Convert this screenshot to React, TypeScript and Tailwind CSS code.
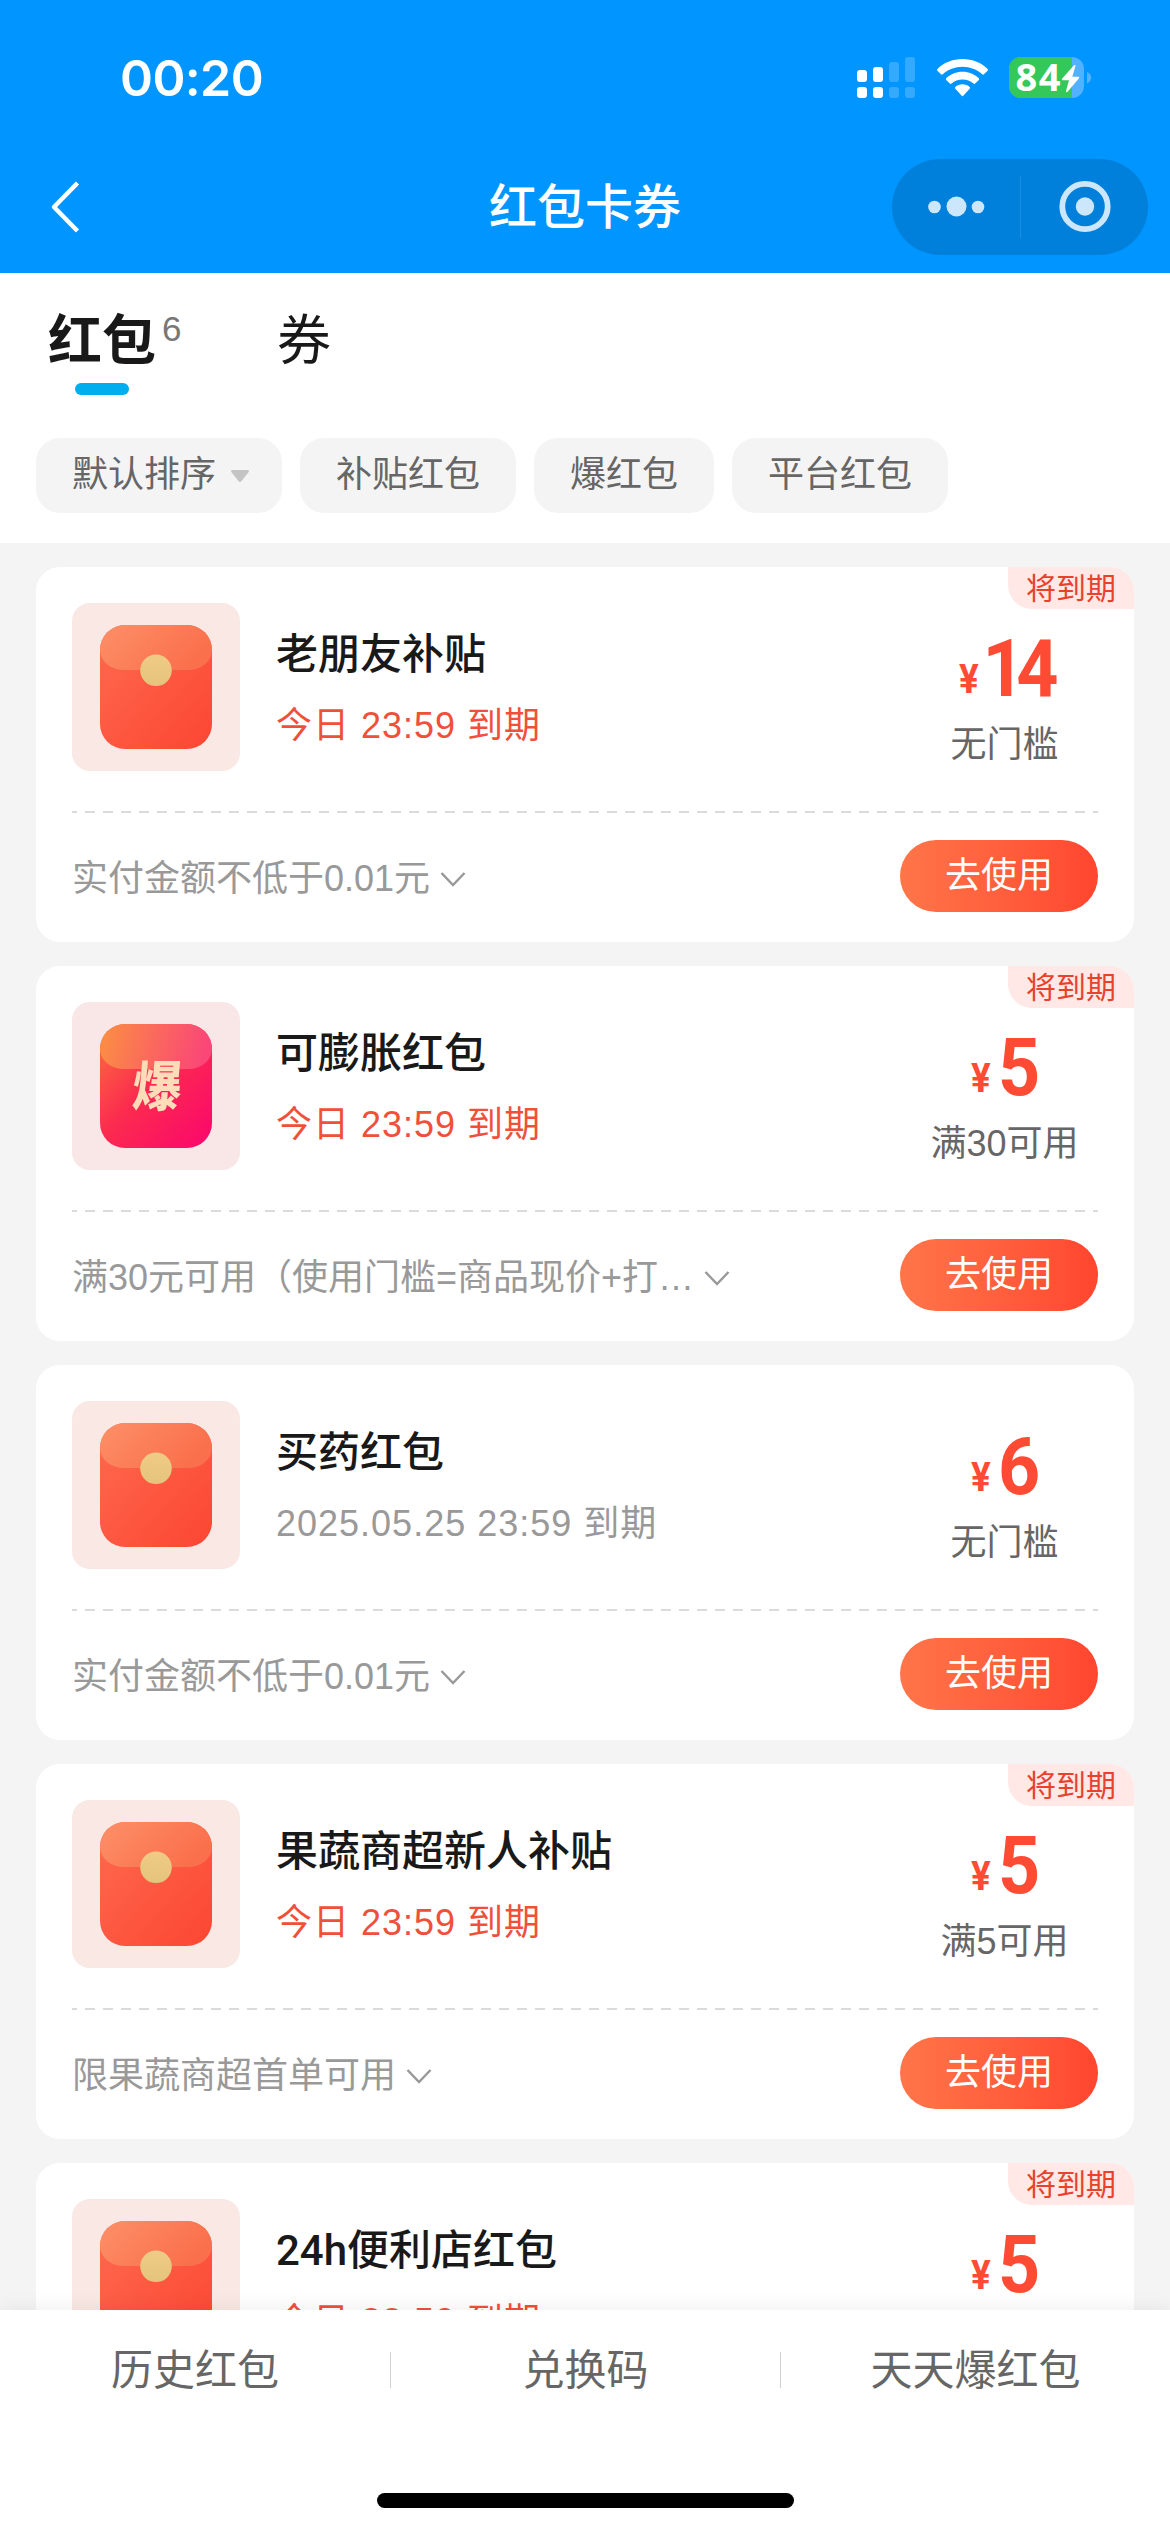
import { clsx } from 'clsx';

interface Coupon {
  id: number;
  title: string;
  expiry: string;
  expiring: boolean;
  amount: string;
  threshold: string;
  rule: string;
  kind: 'normal' | 'boost';
}

const coupons: Coupon[] = [
  {
    id: 1,
    title: '老朋友补贴',
    expiry: '今日 23:59 到期',
    expiring: true,
    amount: '14',
    threshold: '无门槛',
    rule: '实付金额不低于0.01元',
    kind: 'normal',
  },
  {
    id: 2,
    title: '可膨胀红包',
    expiry: '今日 23:59 到期',
    expiring: true,
    amount: '5',
    threshold: '满30可用',
    rule: '满30元可用（使用门槛=商品现价+打…',
    kind: 'boost',
  },
  {
    id: 3,
    title: '买药红包',
    expiry: '2025.05.25 23:59 到期',
    expiring: false,
    amount: '6',
    threshold: '无门槛',
    rule: '实付金额不低于0.01元',
    kind: 'normal',
  },
  {
    id: 4,
    title: '果蔬商超新人补贴',
    expiry: '今日 23:59 到期',
    expiring: true,
    amount: '5',
    threshold: '满5可用',
    rule: '限果蔬商超首单可用',
    kind: 'normal',
  },
  {
    id: 5,
    title: '24h便利店红包',
    expiry: '今日 23:59 到期',
    expiring: true,
    amount: '5',
    threshold: '',
    rule: '',
    kind: 'normal',
  },
];

const filters = ['补贴红包', '爆红包', '平台红包'];
const footerLinks = ['历史红包', '兑换码', '天天爆红包'];

const StatusBar = () => (
  <div className="flex h-[141px] items-start justify-between pl-[120px] pr-[78px]">
    <span className="mt-[48px] font-['Inter'] text-[50px] font-semibold leading-[60px] tracking-[-0.6px] text-white">
      00:20
    </span>
    <div className="mt-[57px] flex items-start">
      <svg className="h-[41px] w-[58px]" viewBox="0 0 58 41" fill="#fff">
        <rect x="0" y="13" width="10" height="12" rx="3" />
        <rect x="16" y="10" width="10" height="15" rx="3" />
        <rect x="32" y="5" width="10" height="20" rx="3" opacity="0.2" />
        <rect x="48" y="0" width="10" height="25" rx="3" opacity="0.2" />
        <rect x="0" y="30" width="10" height="11" rx="3" />
        <rect x="16" y="30" width="10" height="11" rx="3" />
        <rect x="32" y="30" width="10" height="11" rx="3" opacity="0.2" />
        <rect x="48" y="30" width="10" height="11" rx="3" opacity="0.2" />
      </svg>
      <svg className="ml-[22px] mt-[2px] h-[38px] w-[51px]" viewBox="0 0 51 38" fill="#fff">
        <path d="M25.500 0C35.500 0 44.500 3.800 50.600 10C51.100 10.500 51.100 11.200 50.600 11.700L47 15.300C46.500 15.800 45.700 15.800 45.200 15.300C40 10.600 33 7.800 25.500 7.800C18 7.800 11 10.600 5.800 15.300C5.300 15.800 4.500 15.800 4 15.300L0.400 11.700C-0.100 11.200 -0.100 10.500 0.400 10C6.500 3.800 15.500 0 25.500 0Z" />
        <path d="M25.500 12.700C31.900 12.700 37.600 15.100 41.800 19.200C42.300 19.700 42.300 20.400 41.800 20.900L38.200 24.500C37.700 25 37 25 36.400 24.500C33.500 22 29.700 20.500 25.500 20.500C21.300 20.500 17.500 22 14.600 24.500C14 25 13.300 25 12.800 24.500L9.200 20.900C8.700 20.400 8.700 19.700 9.200 19.200C13.400 15.100 19.100 12.700 25.500 12.700Z" />
        <path d="M25.500 25.300C28.300 25.300 30.800 26.300 32.700 28C33.200 28.500 33.200 29.200 32.700 29.700L26.500 36.600C25.900 37.300 25.100 37.300 24.500 36.600L18.300 29.700C17.800 29.200 17.800 28.500 18.300 28C20.200 26.300 22.700 25.300 25.500 25.300Z" />
      </svg>
      <svg className="ml-[21px] h-[41px] w-[83px] overflow-visible" viewBox="0 0 83 41">
        <defs>
          <clipPath id="battery">
            <rect width="75" height="41" rx="12" />
          </clipPath>
        </defs>
        <g clipPath="url(#battery)">
          <rect width="75" height="41" fill="#52b2ff" />
          <rect width="63" height="41" fill="#34c759" />
        </g>
        <path d="M78 15C80.700 16 82.200 18 82.200 20.500C82.200 23 80.700 25 78 26.500Z" fill="#52b2ff" />
        <text x="6.500" y="34" fill="#fff" textLength="45" className="font-['Noto_Sans'] text-[38px] font-bold">
          84
        </text>
        <path
          d="M64.800 8.500L53 21.800C52.500 22.500 52.800 23.200 53.700 23.200H60L57 34C56.700 35.200 57.800 35.600 58.600 34.700L70 21.200C70.600 20.400 70.200 19.800 69.300 19.800H63.300L66.400 9.300C66.700 8 65.600 7.600 64.800 8.500Z"
          fill="#fff"
        />
      </svg>
    </div>
  </div>
);

const NavBar = () => (
  <div className="grid h-[132px] grid-cols-[1fr_auto_1fr] items-center px-[22px]">
    <svg className="ml-[28px] h-[54px] w-[30px]" viewBox="0 0 30 54" fill="none" stroke="#fff" strokeWidth="4.500">
      <path d="M27.500 3L4 27L27.500 51" strokeLinejoin="round" />
    </svg>
    <h1 className="translate-y-px text-[48px] font-medium leading-[60px] text-white">红包卡券</h1>
    <div className="flex h-[96px] w-[256px] items-center justify-self-end rounded-full bg-[#0080db]">
      <svg className="h-[96px] w-[128px]" viewBox="0 0 128 96" fill="#cce6fb">
        <circle cx="42.500" cy="48" r="6.300" />
        <circle cx="64.500" cy="47.500" r="10" />
        <circle cx="86" cy="48" r="6.300" />
      </svg>
      <div className="h-[62px] w-px bg-[#1a8fe2]" />
      <svg className="h-[96px] w-[127px]" viewBox="0 0 127 96">
        <circle cx="64" cy="47.500" r="22.700" fill="none" stroke="#cce6fb" strokeWidth="5.800" />
        <circle cx="64" cy="47.500" r="9.200" fill="#cce6fb" />
      </svg>
    </div>
  </div>
);

const Tabs = () => (
  <div className="flex h-[165px] pl-[48px]">
    <div className="relative flex h-[122px] w-[108px] flex-col items-center">
      <span className="mt-[32px] text-[54px] font-bold leading-[72px] text-[#191919]">红包</span>
      <span className="absolute left-[114px] top-[36px] text-[35px] leading-[40px] text-[#777]">6</span>
      <div className="mt-[6px] h-[12px] w-[54px] rounded-full bg-[#00aeef]" />
    </div>
    <span className="ml-[121px] mt-[32px] text-[54px] leading-[72px] text-[#191919]">券</span>
  </div>
);

const Filters = () => (
  <div className="flex h-[105px] gap-[18px] pl-9 text-[36px] leading-[74px] text-[#666]">
    <button className="flex h-[75px] w-[246px] items-center justify-between rounded-[24px] bg-[#f4f4f4] pl-9 pr-[33px]">
      <span className="-translate-y-px">默认排序</span>
      <svg className="h-[12px] w-[18px]" viewBox="0 0 18 12" fill="#c4c4c4">
        <path d="M1.500 0H16.500C18 0 18.400 1.200 17.500 2.200L10.300 11.200C9.500 12.200 8.500 12.200 7.700 11.200L0.500 2.200C-0.400 1.200 0 0 1.500 0Z" />
      </svg>
    </button>
    {filters.map((name) => (
      <button key={name} className="h-[75px] rounded-[24px] bg-[#f4f4f4] px-9">
        <span className="block -translate-y-px">{name}</span>
      </button>
    ))}
  </div>
);

const NormalIcon = () => (
  <svg className="h-[168px] w-[168px] rounded-[18px] bg-[#f9e8e4]" viewBox="0 0 168 168">
    <defs>
      <linearGradient id="body" x1="0" y1="0" x2="1" y2="1">
        <stop offset="0" stopColor="#ff6a50" />
        <stop offset="1" stopColor="#fb4632" />
      </linearGradient>
      <linearGradient id="flap" x1="0" y1="0" x2="1" y2="0.400">
        <stop offset="0" stopColor="#fc9068" />
        <stop offset="1" stopColor="#fa704c" />
      </linearGradient>
      <linearGradient id="seal" x1="0" y1="0" x2="0" y2="1">
        <stop offset="0" stopColor="#f0cb86" />
        <stop offset="1" stopColor="#e4c47c" />
      </linearGradient>
    </defs>
    <rect x="28" y="22" width="112" height="124" rx="25" fill="url(#body)" />
    <path
      d="M28 47A25 25 0 0 1 53 22H115A25 25 0 0 1 140 47A24 20 0 0 1 116 67H52A24 20 0 0 1 28 47Z"
      fill="url(#flap)"
    />
    <circle cx="84" cy="67.300" r="15.800" fill="url(#seal)" />
  </svg>
);

const BoostIcon = () => (
  <svg className="h-[168px] w-[168px] rounded-[18px] bg-[#f9e6e7]" viewBox="0 0 168 168">
    <defs>
      <linearGradient id="boostBody" x1="0" y1="0.100" x2="0.900" y2="1">
        <stop offset="0" stopColor="#fc6a40" />
        <stop offset="0.450" stopColor="#fb2c4e" />
        <stop offset="1" stopColor="#fb096b" />
      </linearGradient>
      <linearGradient id="boostFlap" x1="0" y1="0" x2="1" y2="0.100">
        <stop offset="0" stopColor="#fb9142" />
        <stop offset="0.500" stopColor="#fb6a5c" />
        <stop offset="1" stopColor="#fa4678" />
      </linearGradient>
    </defs>
    <rect x="28" y="22" width="112" height="124" rx="25" fill="url(#boostBody)" />
    <path
      d="M28 47A25 25 0 0 1 53 22H115A25 25 0 0 1 140 47A24 20 0 0 1 116 67H52A24 20 0 0 1 28 47Z"
      fill="url(#boostFlap)"
    />
    <text
      transform="translate(83.500 104) skewX(-5) scale(0.920 1.020)"
      textAnchor="middle"
      fill="#ffdcb9"
      className="text-[53px] font-black"
    >
      爆
    </text>
  </svg>
);

const CouponCard = ({ coupon }: { coupon: Coupon }) => (
  <article className="relative h-[375px] shrink-0 overflow-hidden rounded-[24px] bg-white px-9 pt-9">
    {coupon.expiring && (
      <span className="absolute right-0 top-0 h-[42px] w-[126px] rounded-bl-[24px] bg-[#ffe8e5] text-center text-[30px] leading-[43px] text-[#e8412c]">
        将到期
      </span>
    )}
    <div className="flex h-[168px]">
      {coupon.kind === 'boost' ? <BoostIcon /> : <NormalIcon />}
      <div className="ml-[36px] flex-1">
        <h2 className="mt-[22px] font-['Roboto','Noto_Sans_CJK_SC',sans-serif] text-[42px] font-medium leading-[60px] text-[#191919]">
          {coupon.title}
        </h2>
        <p
          className={clsx(
            'mt-[16px] text-[36px] leading-[50px] tracking-[1px]',
            coupon.expiring ? 'text-[#f0503a]' : 'text-[#999]'
          )}
        >
          {coupon.expiry}
        </p>
      </div>
      <div className="flex w-[187px] flex-col items-center">
        <div className="mt-[27px] flex h-[78px] origin-center scale-x-[0.92] items-baseline gap-[8px] font-['Roboto'] font-bold leading-[78px] text-[#ff4b33]">
          <span className="-translate-y-[3px] text-[40px]">¥</span>
          <span className={clsx('text-[80px]', coupon.amount.length > 1 ? '-ml-[4px] tracking-[-9px]' : 'tracking-[-3px]')}>
            {coupon.amount}
          </span>
        </div>
        <span className="mt-[12px] text-[36px] leading-[50px] text-[#666]">{coupon.threshold}</span>
      </div>
    </div>
    <svg className="mt-[40px] h-[2px] w-full" viewBox="0 0 1026 2">
      <path d="M-5 1H1026" stroke="#d0d0d0" strokeWidth="1.300" strokeDasharray="10 8" />
    </svg>
    <div className="mt-[27px] flex items-center justify-between">
      <div className="flex items-center pt-[5px]">
        <span className="text-[36px] leading-[50px] text-[#999]">{coupon.rule}</span>
        <svg className="ml-[10px] h-[16px] w-[26px]" viewBox="0 0 26 16" fill="none" stroke="#999" strokeWidth="2.500">
          <path d="M1.500 2L13 14L24.500 2" />
        </svg>
      </div>
      <button className="h-[72px] w-[198px] rounded-full bg-linear-to-r from-[#ff7549] to-[#ff452f] text-[36px] leading-[72px] text-white">
        去使用
      </button>
    </div>
  </article>
);

const Footer = () => (
  <footer className="relative flex h-[222px] shrink-0 flex-col items-center justify-between bg-white pb-6 shadow-[0_0_20px_rgba(0,0,0,0.08)]">
    <div className="grid w-full grid-cols-3 pt-[42px]">
      {footerLinks.map((name, i) => (
        <a
          key={name}
          className={clsx('h-[36px] text-center text-[42px] leading-[38px] text-[#666]', i > 0 && 'border-l border-[#d0d0d0]')}
        >
          {name}
        </a>
      ))}
    </div>
    <div className="h-[15px] w-[417px] rounded-full bg-black" />
  </footer>
);

export default function App() {
  return (
    <div className="flex h-[2532px] w-[1170px] flex-col overflow-hidden bg-[#f4f4f4] font-['Liberation_Sans','Noto_Sans_CJK_SC',sans-serif]">
      <header className="shrink-0 bg-[#0095ff]">
        <StatusBar />
        <NavBar />
      </header>
      <section className="shrink-0 bg-white">
        <Tabs />
        <Filters />
      </section>
      <main className="flex min-h-0 flex-1 flex-col gap-6 overflow-hidden px-9 pt-6">
        {coupons.map((coupon) => (
          <CouponCard key={coupon.id} coupon={coupon} />
        ))}
      </main>
      <Footer />
    </div>
  );
}
